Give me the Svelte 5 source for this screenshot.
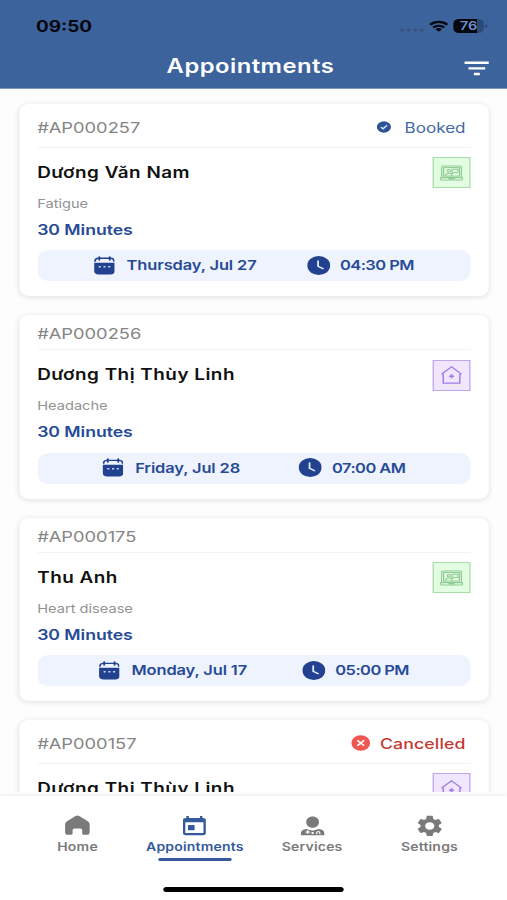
<!--
  Appointments — list of booked visits with status bar, header and tab bar.
-->
<script lang="ts">
  interface Appointment {
    code: string;
    name: string;
    visit: 'online' | 'home';
    reason?: string;
    duration?: string;
    date?: string;
    time?: string;
    status?: 'booked' | 'cancelled';
  }

  const appointments: Appointment[] = [
    {
      code: '#AP000257',
      name: 'Dương Văn Nam',
      visit: 'online',
      reason: 'Fatigue',
      duration: '30 Minutes',
      date: 'Thursday, Jul 27',
      time: '04:30 PM',
      status: 'booked',
    },
    {
      code: '#AP000256',
      name: 'Dương Thị Thùy Linh',
      visit: 'home',
      reason: 'Headache',
      duration: '30 Minutes',
      date: 'Friday, Jul 28',
      time: '07:00 AM',
    },
    {
      code: '#AP000175',
      name: 'Thu Anh',
      visit: 'online',
      reason: 'Heart disease',
      duration: '30 Minutes',
      date: 'Monday, Jul 17',
      time: '05:00 PM',
    },
    {
      code: '#AP000157',
      name: 'Dương Thị Thùy Linh',
      visit: 'home',
      status: 'cancelled',
    },
  ];

  const tabs = ['Home', 'Appointments', 'Services', 'Settings'];
  let active = $state('Appointments');
</script>

<div class="screen">
  <header>
    <div class="status-bar">
      <span class="clock">09:50</span>
      <div class="indicators">
        <svg class="dots" width="20" height="4" viewBox="0 0 20 4">
          <circle cx="2" cy="2" r="1.7" /><circle cx="7.3" cy="2" r="1.7" />
          <circle cx="12.6" cy="2" r="1.7" /><circle cx="17.9" cy="2" r="1.7" />
        </svg>
        <svg width="16" height="12.5" viewBox="0 0 17 13" fill="none" stroke="#05080f" stroke-width="2.3">
          <path d="M1 4.9a10.7 10.7 0 0 1 15 0M3.7 7.9a6.9 6.9 0 0 1 9.6 0" />
          <path d="M8.5 12.4 5.7 9.7a4 4 0 0 1 5.6 0z" fill="#05080f" stroke="none" />
        </svg>
        <div class="battery"><span>76</span></div>
      </div>
    </div>
    <div class="title-bar">
      <h1>Appointments</h1>
      <button class="filter" aria-label="Filter">
        <svg width="20.5" height="15" viewBox="0 0 21 15" stroke="#fff" stroke-width="2.4">
          <path d="M0 1.6h21M3.5 7.4h14M8 13.1h5" />
        </svg>
      </button>
    </div>
  </header>

  <main>
    {#each appointments as item}
      <article class="card">
        <div class="card-head" class:tall={item.status}>
          <span class="code">{item.code}</span>
          {#if item.status === 'booked'}
            <span class="status booked">
              <svg width="12" height="12" viewBox="0 0 12 12">
                <circle cx="6" cy="6" r="5.8" fill="#2d5494" />
                <path d="M3.5 6.1 5.3 7.8 8.6 4.4" fill="none" stroke="#dce8fb" stroke-width="1.3" />
              </svg>
              <span>Booked</span>
            </span>
          {:else if item.status === 'cancelled'}
            <span class="status cancelled">
              <svg width="16" height="16" viewBox="0 0 16 16">
                <circle cx="8" cy="8" r="7.7" fill="#ef5753" />
                <path d="m5.2 5.3 5.6 5.4M10.8 5.3 5.2 10.7" stroke="#fff" stroke-width="1.5" />
              </svg>
              <span>Cancelled</span>
            </span>
          {/if}
        </div>

        <div class="card-body">
          <div class="details">
            <h2>{item.name}</h2>
            {#if item.reason}
              <p class="reason">{item.reason}</p>
            {/if}
            {#if item.duration}
              <p class="duration">{item.duration}</p>
            {/if}
          </div>
          <div class="visit {item.visit}">
            {#if item.visit === 'online'}
              <svg width="19" height="16" viewBox="0 0 19 16" fill="none" stroke="#8fcb92" stroke-width="1">
                <rect x="1.4" y="1" width="16.2" height="11.6" rx="1" />
                <rect x="3" y="2.6" width="13" height="8.5" />
                <path d="M.5 12.8h18v1.4q0 .8-1 .8h-16q-1 0-1-.8zM7.5 12.8v1h4v-1" />
                <circle cx="7.3" cy="5.8" r="1.3" />
                <path d="M4.6 10.7q.3-2.7 2.6-2.7t2.7 2.7M10 4.2h4.7v3.2h-3L10 8.6z" />
              </svg>
            {:else}
              <svg width="17" height="18" viewBox="0 0 17 18" fill="none" stroke="#a27de6" stroke-width="1.2">
                <path d="M.7 7.8 8.5.9l7.8 6.9-1 .7v8.6H1.7V8.5z" />
                <path d="M8.5 8.2v4M6.5 10.2h4" stroke-width="1.5" />
              </svg>
            {/if}
          </div>
        </div>

        {#if item.date}
          <div class="slot">
            <span class="date">
              <svg width="17.5" height="19" viewBox="0 0 18 19">
                <path d="M4.6.8v3M13.4.8v3" stroke="#22418f" stroke-width="1.6" stroke-linecap="round" />
                <path d="M1 5.7V5q0-2.9 2.9-2.9h10.2Q17 2.1 17 5v.7" fill="none" stroke="#22418f" stroke-width="1.4" />
                <path d="M.3 6.6h17.4v8.2q0 3.9-3.9 3.9H4.2q-3.9 0-3.9-3.9z" fill="#22418f" />
                <path d="M4.1 10.8h1.8M8.1 10.8h1.8M12.1 10.8h1.8" stroke="#c5d5f5" stroke-width="1.4" />
              </svg>
              <span>{item.date}</span>
            </span>
            <span class="time">
              <svg width="19" height="19" viewBox="0 0 19 19">
                <circle cx="9.5" cy="9.5" r="9.4" fill="#22418f" />
                <path d="M9 5v5.4l4 2.3" fill="none" stroke="#dfe9fd" stroke-width="1.5" stroke-linecap="round" />
              </svg>
              <span>{item.time}</span>
            </span>
          </div>
        {/if}
      </article>
    {/each}
  </main>

  <nav>
    {#each tabs as tab}
      <button class="tab" class:active={active === tab} onclick={() => (active = tab)}>
        <svg width="21" height="21" viewBox="0 0 24 24" fill="currentColor">
          {#if tab === 'Home'}
            <path d="M9.9 1.4q2.1-1.5 4.2 0l7.6 5.6q1.8 1.3 1.8 3.5v9.1q0 2.9-2.7 2.9h-2.9q-1.4 0-1.4-1.4V17.200q0-1.900-1.900-1.900H9.400q-1.900 0-1.900 1.900v3.900q0 1.400-1.400 1.400H3.200Q.5 22.500.5 19.600v-9.100Q.5 8.300 2.300 7z" />
          {:else if tab === 'Appointments'}
            <path fill-rule="evenodd" d="M4.500 1h2.300v2.300h10.400V1h2.300v2.300h.5q2.700 0 2.700 2.500v14.700q0 2.500-2.700 2.500H4q-2.700 0-2.700-2.500V5.800Q1.300 3.300 4 3.300h.5zM3.500 8.300v12.400h17V8.300zM6 11.300h6.200v6.200H6z" />
          {:else if tab === 'Services'}
            <path d="M12 1.800c3.600 0 6 2.800 6 6.200s-2.400 6.600-6 6.600S6 11.400 6 8s2.400-6.200 6-6.200z" />
            <path fill-rule="evenodd" d="M1 23v-1.800q0-4.700 5.300-5.200L12 18l5.700-2q5.300.5 5.300 5.200V23zM6.700 17.500v1.300H5.400v1.400h1.300v1.300h1.400v-1.300h1.300v-1.400H8.100v-1.300zM11 19.400v2.200h2v-2.200zM15.300 22h1.100v-1.500q0-1 .9-1t.9 1V22h1.100v-1.700q0-2-2-2t-2 2z" />
          {:else}
            <path transform="translate(-2.300 -1.900) scale(1.200)" d="M19.140 12.940c.04-.3.060-.61.060-.94 0-.32-.02-.64-.07-.94l2.030-1.580c.18-.14.23-.41.12-.61l-1.920-3.320c-.12-.22-.37-.29-.59-.22l-2.390.96c-.5-.38-1.030-.7-1.620-.94l-.36-2.540c-.04-.24-.24-.41-.48-.41h-3.840c-.24 0-.43.17-.47.41l-.36 2.540c-.59.24-1.130.57-1.620.94l-2.390-.96c-.22-.08-.47 0-.59.22L2.740 8.870c-.12.21-.08.47.12.61l2.030 1.580c-.05.3-.09.63-.09.94s.02.64.07.94l-2.030 1.580c-.18.14-.23.41-.12.61l1.920 3.320c.12.22.37.29.59.22l2.390-.96c.5.38 1.030.7 1.620.94l.36 2.540c.05.24.24.41.48.41h3.840c.24 0 .44-.17.47-.41l.36-2.540c.59-.24 1.130-.56 1.620-.94l2.390.96c.22.08.47 0 .59-.22l1.920-3.320c.12-.22.07-.47-.12-.61l-2.010-1.580zM12 15.600c-1.980 0-3.600-1.620-3.600-3.600s1.620-3.600 3.600-3.600 3.600 1.620 3.600 3.600-1.620 3.600-3.600 3.600z" />
          {/if}
        </svg>
        <span class="label">{tab}</span>
      </button>
    {/each}
  </nav>
  <div class="home-indicator"></div>
</div>

<style>
  :global(body) {
    background: #fff;
    overflow: hidden;
  }

  /* 416pt-wide layout stretched to fill the 507px viewport */
  .screen {
    display: flex;
    flex-direction: column;
    width: 416px;
    height: 900px;
    overflow: hidden;
    background: #fdfdfe;
    font-family: Inter, 'Noto Sans', sans-serif;
    transform: scaleX(1.21875);
    transform-origin: 0 0;
  }

  h1,
  h2,
  p {
    margin: 0;
  }

  button {
    padding: 0;
    border: 0;
    background: none;
    font: inherit;
    color: inherit;
  }

  svg {
    display: block;
    flex: none;
  }

  header {
    flex: none;
    box-sizing: border-box;
    height: 89px;
    background: #3d639c;
    border-bottom: 1px solid #7f96c4;
  }

  .status-bar {
    display: flex;
    justify-content: space-between;
    align-items: center;
    height: 52px;
    padding: 0 17px 0 29.5px;
  }

  .clock {
    font-size: 15.5px;
    font-weight: 700;
    color: #05080f;
  }

  .indicators {
    display: flex;
    align-items: center;
    gap: 4px;
  }

  .dots {
    margin-top: 8px;
    fill: #365480;
  }

  .battery {
    position: relative;
    width: 25px;
    height: 14px;
    margin-right: 2px;
    border-radius: 4.5px;
    background: linear-gradient(90deg, #05080f 76%, #2c4a77 76%);
    color: #6d93cc;
    font-size: 12px;
    font-weight: 600;
    line-height: 14px;
    text-align: center;
  }

  .battery::after {
    content: '';
    position: absolute;
    left: 26px;
    top: 5px;
    width: 1.5px;
    height: 4px;
    border-radius: 0 2px 2px 0;
    background: #2c4a77;
  }

  .title-bar {
    display: grid;
    grid-template-columns: 1fr auto 1fr;
    align-items: center;
    height: 28px;
    padding: 0 15px;
  }

  h1 {
    grid-column: 2;
    margin-left: -5px;
    color: #fff;
    font-size: 19.5px;
    font-weight: 600;
    letter-spacing: 0.4px;
    line-height: 28px;
  }

  .filter {
    justify-self: end;
    margin-top: 5px;
  }

  main {
    flex: none;
    box-sizing: border-box;
    height: 702.5px;
    padding: 15px 15px 0 15.5px;
    overflow: hidden;
  }

  .card {
    margin-bottom: 19px;
    padding: 0 15px 15px;
    border-radius: 8px;
    background: #fff;
    box-shadow: 0 1px 5px 1px rgba(0, 0, 0, 0.09);
  }

  .card-head {
    display: flex;
    justify-content: space-between;
    align-items: center;
    box-sizing: border-box;
    height: 35px;
    padding: 3px 4px 0 0;
    border-bottom: 1px solid #f3f3f5;
  }

  .card-head.tall {
    height: 43.5px;
    padding-top: 4px;
  }

  .code {
    font-size: 15px;
    color: #858585;
  }

  .status {
    display: flex;
    align-items: center;
    font-size: 14.5px;
  }

  .booked {
    gap: 10.5px;
    color: #4269a5;
    font-size: 14px;
  }

  .cancelled {
    gap: 8px;
    font-weight: 500;
    letter-spacing: 0.1px;
    color: #c23832;
  }

  .card-body {
    display: flex;
    justify-content: space-between;
    height: 102.5px;
  }

  .details {
    padding-top: 12px;
  }

  h2 {
    color: #111;
    font-size: 15.5px;
    font-weight: 600;
    line-height: 26px;
    letter-spacing: 0.4px;
  }

  .reason {
    margin-top: 6px;
    font-size: 12px;
    line-height: 24px;
    color: #929292;
  }

  .duration {
    font-size: 14.5px;
    font-weight: 600;
    line-height: 28px;
    letter-spacing: -0.05px;
    color: #274a96;
  }

  .visit {
    display: flex;
    justify-content: center;
    align-items: center;
    box-sizing: border-box;
    width: 31px;
    height: 31px;
    margin-top: 9.5px;
    border: 1px solid;
  }

  .visit.online {
    border-color: #a9dcaa;
    background: #e2fde2;
  }

  .visit.home {
    border-color: #c1a5ed;
    background: #f0e6fd;
  }

  .slot {
    display: flex;
    justify-content: space-evenly;
    align-items: center;
    box-sizing: border-box;
    height: 31px;
    padding-bottom: 1px;
    border-radius: 9px;
    background: #eef3fe;
    color: #274a96;
    font-size: 13.5px;
    font-weight: 600;
    white-space: nowrap;
  }

  .date,
  .time {
    display: flex;
    align-items: center;
  }

  .date {
    gap: 9.5px;
    margin-right: -5px;
    letter-spacing: -0.1px;
  }

  .time {
    gap: 8px;
    letter-spacing: -0.45px;
  }

  nav {
    flex: none;
    display: grid;
    grid-template-columns: repeat(4, 1fr);
    height: 71px;
    margin-top: 4.5px;
    padding: 0 15.5px;
    background: #fff;
    box-shadow: 0 -1px 3px rgba(0, 0, 0, 0.07);
  }

  .tab {
    display: flex;
    flex-direction: column;
    align-items: center;
    padding-top: 19px;
    color: #7a7a7a;
  }

  .label {
    padding-top: 3px;
    font-size: 11.5px;
    font-weight: 600;
    line-height: 16px;
    letter-spacing: 0.15px;
  }

  .active {
    color: #345a9c;
  }

  .active::after {
    content: '';
    width: 60px;
    height: 3px;
    margin-top: 3px;
    border-radius: 1px;
    background: #345a9c;
  }

  .home-indicator {
    flex: 1;
    background: #fff;
  }

  .home-indicator::after {
    content: '';
    display: block;
    width: 148px;
    height: 5px;
    margin: 20px auto 0;
    border-radius: 3px;
    background: #000;
  }
</style>
